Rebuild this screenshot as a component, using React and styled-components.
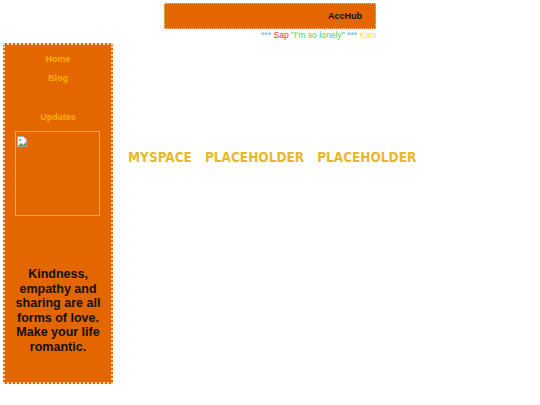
import styled, { createGlobalStyle } from "styled-components"

const GlobalStyle = createGlobalStyle`
  body {
    margin: 0;
    background: #ffffff;
    font-family: "Liberation Sans", Arial, sans-serif;
  }
`

const Page = styled.div`
  width: 540px;
  height: 405px;
  overflow: hidden;
  padding-top: 3px;
  box-sizing: border-box;
`

const TopBar = styled.div`
  width: 212px;
  height: 26px;
  margin: 0 auto;
  box-sizing: border-box;
  background: #e36600;
  border: 1px dotted #f6c08a;
  display: flex;
  align-items: center;
  justify-content: flex-end;
  padding-right: 13px;
  font-size: 9px;
  font-weight: bold;
  color: #111;
`

const Ticker = styled.div`
  width: 212px;
  margin: 1px auto 0;
  overflow: hidden;
  white-space: nowrap;
  font-size: 8.6px;
  line-height: 10px;
  padding-left: 97px;
  box-sizing: border-box;
`

const Tick = styled.span`
  color: ${p => p.$color};
`

const Body = styled.div`
  display: flex;
  align-items: flex-start;
  margin-top: 3px;
  padding-left: 3px;
`

const Sidebar = styled.div`
  width: 110px;
  height: 341px;
  box-sizing: border-box;
  background: #e36600;
  border: 2px dotted #f8d2a8;
  display: flex;
  flex-direction: column;
  align-items: center;
  padding-top: 9px;
`

const NavLink = styled.a`
  color: #f7b200;
  font-size: 9px;
  font-weight: bold;
  line-height: 11px;
  margin-bottom: ${p => p.$gap}px;
  text-decoration: none;
`

const ImageBox = styled.div`
  width: 85px;
  height: 85px;
  box-sizing: border-box;
  border: 1px solid #f2a464;
  margin-top: 8px;
  align-self: flex-start;
  margin-left: 10px;
  padding: 1px;
`

const Quote = styled.div`
  margin-top: 51px;
  width: 92px;
  text-align: center;
  font-size: 12.5px;
  line-height: 14.6px;
  font-weight: bold;
  color: #111;
`

const Main = styled.div`
  display: flex;
  gap: 13px;
  margin-left: 15px;
  margin-top: 106px;
`

const Heading = styled.span`
  font-family: "DejaVu Sans Condensed", "DejaVu Sans", sans-serif;
  font-weight: bold;
  font-size: 13.5px;
  color: #e9b72c;
`

const BrokenImage = () => (
  <svg width="10" height="11" viewBox="0 0 10 11">
    <path d="M0.5 0.5h6l3 3v7h-9z" fill="#f4f4f4" stroke="#aaa" />
    <path d="M1 10l3-3 2 2 3-3v4z" fill="#5a9a3c" />
    <circle cx="3" cy="4" r="1" fill="#5b8ed8" />
  </svg>
)

export default function App() {
  return (
    <Page>
      <GlobalStyle />
      <TopBar>AccHub</TopBar>
      <Ticker>
        <Tick $color="#5aa8e8">*** </Tick>
        <Tick $color="#e8352b">Sap </Tick>
        <Tick $color="#4fd04f">"I'm so lonely" </Tick>
        <Tick $color="#5aa8e8">*** </Tick>
        <Tick $color="#f0e030">Kanon</Tick>
      </Ticker>
      <Body>
        <Sidebar>
          <NavLink $gap={8}>Home</NavLink>
          <NavLink $gap={28}>Blog</NavLink>
          <NavLink $gap={0}>Updates</NavLink>
          <ImageBox>
            <BrokenImage />
          </ImageBox>
          <Quote>
            Kindness, empathy and sharing are all forms of love. Make your life
            romantic.
          </Quote>
        </Sidebar>
        <Main>
          <Heading>MYSPACE</Heading>
          <Heading>PLACEHOLDER</Heading>
          <Heading>PLACEHOLDER</Heading>
        </Main>
      </Body>
    </Page>
  )
}
